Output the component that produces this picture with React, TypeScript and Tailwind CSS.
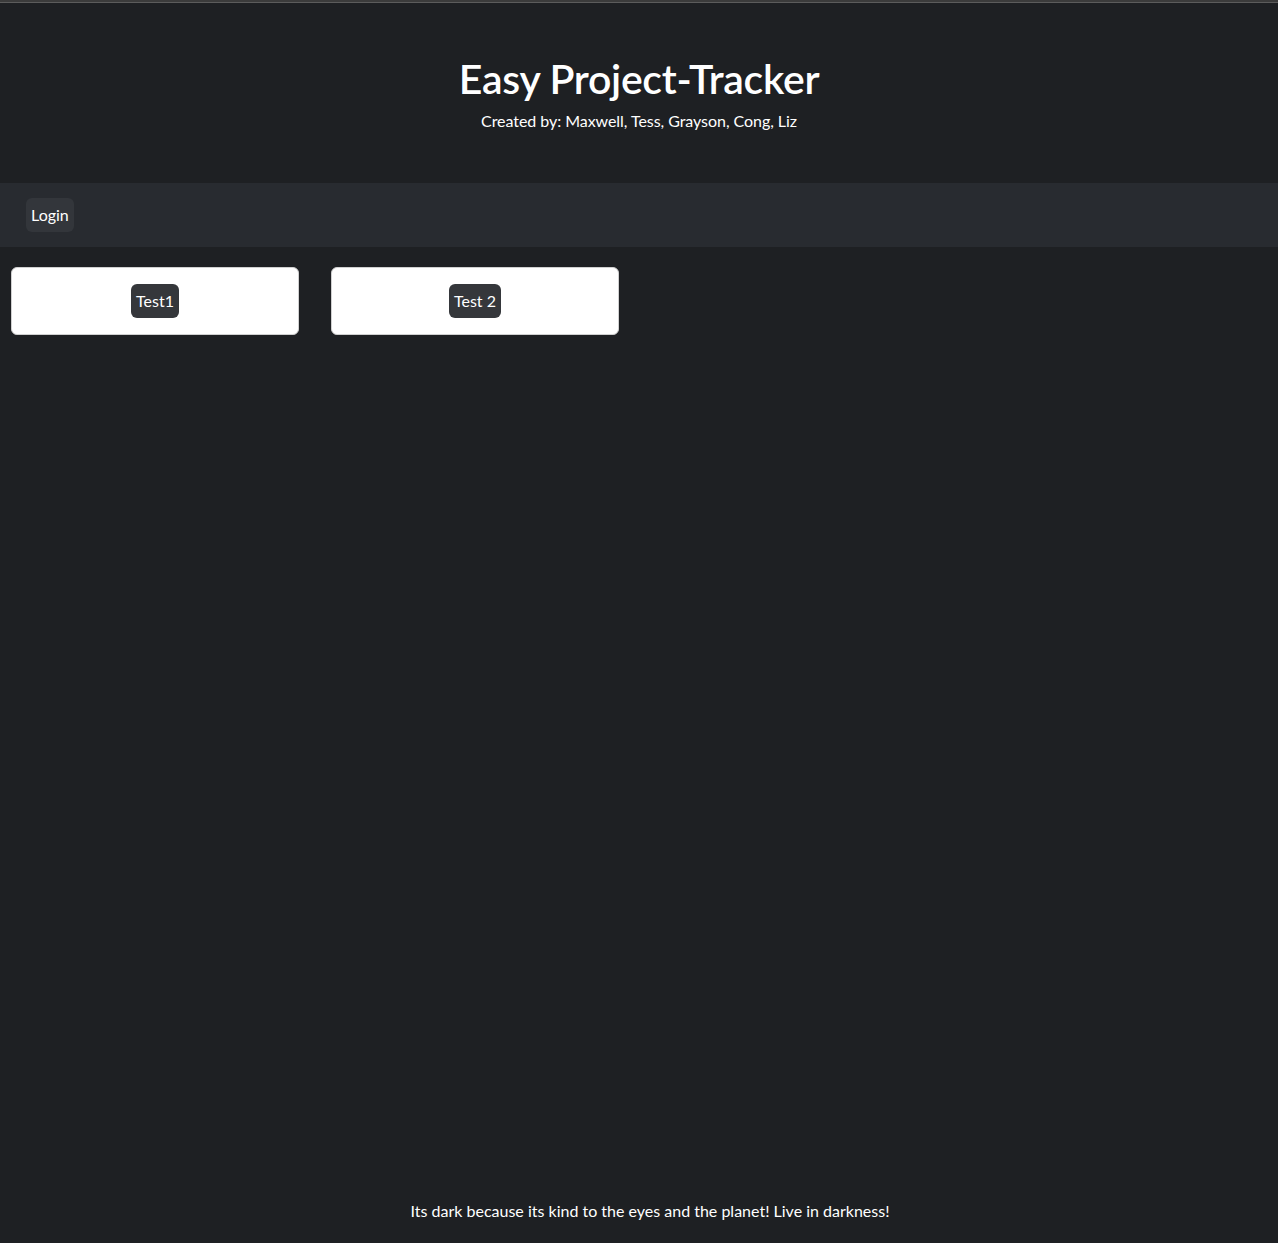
export default function App() {
	const projects = ["Test1", "Test 2"];

	return (
		<div
			className="min-h-[1243px] flex flex-col bg-[#1e2023] text-white"
			style={{ fontFamily: '"Segoe UI", Lato, "Noto Sans", sans-serif' }}
		>
			<div className="h-[2px] bg-[#3b3b3b]" />
			<div className="h-px bg-[#5c5c5c]" />

			<header className="h-[180px] flex flex-col items-center pt-[52px]">
				<h1 className="text-[41px] leading-[48px] font-semibold tracking-[-0.3px]">
					Easy Project-Tracker
				</h1>
				<p className="text-[16px] leading-6 mt-[6px] tracking-[-0.05px]">
					Created by: Maxwell, Tess, Grayson, Cong, Liz
				</p>
			</header>

			<nav className="h-16 bg-[#282b30] flex items-center px-[26px]">
				<button className="h-[34px] px-[5px] rounded-md bg-[#33363b] text-[16px]">
					Login
				</button>
			</nav>

			<main className="flex gap-8 px-[11px] pt-5">
				{projects.map((name) => (
					<div
						key={name}
						className="w-[288px] h-[68px] bg-white border border-[#d0d0d0] rounded-md flex items-center justify-center"
					>
						<button className="h-[34px] px-[5px] rounded-md bg-[#35373b] text-white text-[16px]">
							{name}
						</button>
					</div>
				))}
			</main>

			<footer className="mt-auto pl-[22px] pb-[20px] text-center text-[16px] leading-6">
				Its dark because its kind to the eyes and the planet! Live in darkness!
			</footer>
		</div>
	);
}
